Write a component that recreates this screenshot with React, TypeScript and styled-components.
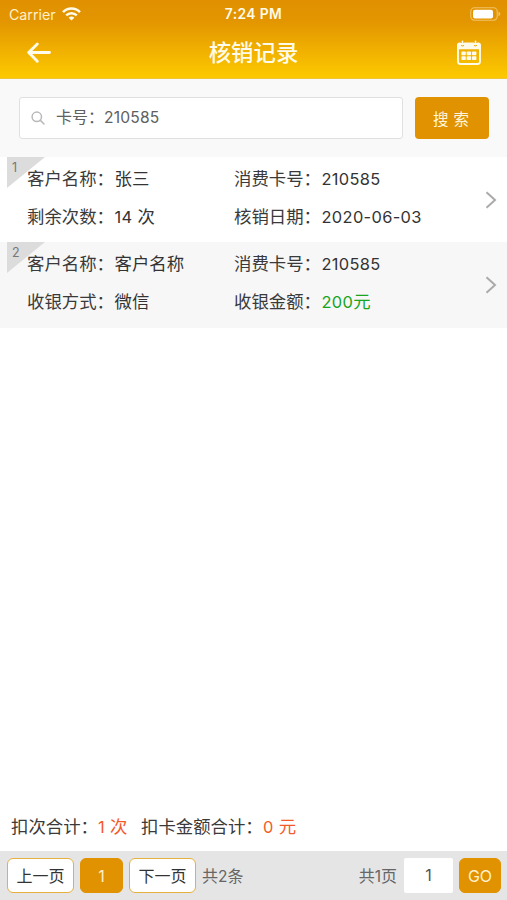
import React from "react";
import styled, { createGlobalStyle } from "styled-components";

const Global = createGlobalStyle`
  * { box-sizing: border-box; }
  body { margin: 0; background: #fff; }
  button, input { font: inherit; margin: 0; }
`;

const Screen = styled.div`
  width: 100%;
  height: 900px;
  display: flex;
  flex-direction: column;
  background: #fff;
  color: #3a3a3a;
  font-family: Inter, "Noto Sans CJK SC", sans-serif;
  font-size: 17.4px;
  overflow: hidden;
`;

const Header = styled.header`
  height: 79px;
  flex: none;
  background: linear-gradient(#e09000 0, #e39600 22px, #fcc800 76px, #fcc800 100%);
  color: #fffbea;
  border-bottom: 1px solid #eec338;
`;

const StatusBar = styled.div`
  height: 27px;
  padding: 0 6px 0 9px;
  display: grid;
  grid-template-columns: 1fr auto 1fr;
  align-items: center;
  line-height: 27px;
`;

const Carrier = styled.div`
  display: flex;
  align-items: center;
  gap: 6px;
  font-size: 14.2px;
  color: #fff0c9;
`;

const Clock = styled.div`
  margin-right: 3px;
  font-weight: 600;
  font-size: 13.8px;
  letter-spacing: 0.4px;
  line-height: 28px;
`;

const Battery = styled.svg`
  justify-self: end;
  margin-top: -1px;
`;

const NavBar = styled.div`
  height: 51px;
  padding: 0 25px 0 25px;
  display: grid;
  grid-template-columns: 28px 1fr 26px;
  align-items: center;
`;

const Title = styled.h1`
  margin: 0 2px 0 0;
  text-align: center;
  font-size: 22.4px;
  line-height: 50px;
  font-weight: 500;
`;

const IconButton = styled.button`
  border: 0;
  padding: 0;
  background: none;
  display: flex;
  color: inherit;
`;

const SearchBar = styled.div`
  height: 78px;
  flex: none;
  padding: 18px 18px 18px 19px;
  display: flex;
  gap: 12px;
  background: #f9f9f9;
`;

const SearchBox = styled.label`
  flex: 1;
  height: 42px;
  padding: 0 11px;
  display: flex;
  align-items: center;
  gap: 11px;
  background: #fff;
  border: 1.5px solid #e0e0e0;
  border-radius: 3px;
  color: #606060;
  font-size: 16px;
  line-height: 24px;
`;

const SearchText = styled.span`
  margin-top: -2px;
`;

const SearchButton = styled.button`
  width: 74px;
  height: 42px;
  border: 0;
  padding: 0 2px 1px 0;
  border-radius: 4px;
  background: #e09200;
  color: #fff6dc;
  font-size: 15.5px;
  word-spacing: 0.5px;
`;

const Record = styled.article<{ $shaded?: boolean }>`
  height: ${(p) => (p.$shaded ? 86 : 85)}px;
  flex: none;
  padding: 3px 10px 0 7px;
  position: relative;
  display: grid;
  grid-template-columns: 20px 207px 1fr 12px;
  background: ${(p) => (p.$shaded ? "#f7f7f7" : "#fff")};
`;

const Corner = styled.span`
  position: absolute;
  left: 7px;
  top: 0;
  width: 38px;
  height: 31px;
  padding-left: 5px;
  background: #dcdcdc;
  clip-path: polygon(0 0, 100% 0, 0 100%);
  color: #777;
  font-size: 12.5px;
  line-height: 21px;
`;

const Column = styled.div`
  display: flex;
  flex-direction: column;
`;

const Field = styled.div`
  height: 38px;
  display: flex;
  align-items: center;
  line-height: 26px;
  white-space: nowrap;
`;

const Label = styled.span`
  width: 87.5px;
`;

const Value = styled.span<{ $green?: boolean }>`
  color: ${(p) => (p.$green ? "#18a51b" : "#333")};
`;

const Num = styled.span<{ $size?: number; $spacing?: number }>`
  font-size: ${(p) => p.$size ?? 16.4}px;
  letter-spacing: ${(p) => p.$spacing ?? 0.35}px;
`;

const Chevron = styled.svg`
  align-self: center;
  margin-top: -3px;
`;

const Spacer = styled.div`
  flex: 1;
`;

const Totals = styled.div`
  height: 50px;
  flex: none;
  padding: 0 11px 1px;
  display: flex;
  align-items: center;
  white-space: nowrap;
`;

const TotalLabel = styled.span<{ $width: number }>`
  width: ${(p) => p.$width}px;
`;

const TotalValue = styled.span<{ $width?: number }>`
  width: ${(p) => (p.$width ? `${p.$width}px` : "auto")};
  color: #f35a2a;
`;

const Pager = styled.footer`
  height: 49px;
  flex: none;
  padding: 7px 6px 7px 7px;
  display: flex;
  align-items: center;
  background: #e5e5e5;
  color: #666;
  font-size: 16px;
  white-space: nowrap;
`;

const PageCount = styled.span`
  margin-top: -2px;
`;

const PageButton = styled.button<{ $width: number; $filled?: boolean }>`
  width: ${(p) => p.$width}px;
  height: 35px;
  padding: 0;
  margin-right: 6px;
  border: 1.5px solid ${(p) => (p.$filled ? "#e09200" : "#e6b03f")};
  border-radius: 6px;
  background: ${(p) => (p.$filled ? "#e09200" : "#fff")};
  color: ${(p) => (p.$filled ? "#fff0c9" : "#333")};
  line-height: 30px;
  &:last-child { margin-right: 0; }
`;

const PageInput = styled.input`
  width: 49px;
  height: 35px;
  margin: 0 6px 0 7px;
  padding: 0 0 1px;
  border: 0;
  border-radius: 2px;
  background: #fff;
  color: #555;
  text-align: center;
`;

function Mixed({ text, size, spacing }: { text: string; size?: number; spacing?: number }) {
  return (
    <>
      {text.split(/([\d-]+ ?)/).filter(Boolean).map((part, i) =>
        /\d/.test(part) ? <Num key={i} $size={size} $spacing={spacing}>{part}</Num> : part
      )}
    </>
  );
}

type Item = { label: string; value: string; green?: boolean };

const records: Item[][][] = [
  [
    [{ label: "客户名称：", value: "张三" }, { label: "剩余次数：", value: "14 次" }],
    [{ label: "消费卡号：", value: "210585" }, { label: "核销日期：", value: "2020-06-03" }],
  ],
  [
    [{ label: "客户名称：", value: "客户名称" }, { label: "收银方式：", value: "微信" }],
    [{ label: "消费卡号：", value: "210585" }, { label: "收银金额：", value: "200元", green: true }],
  ],
];

export default function App() {
  return (
    <Screen>
      <Global />
      <Header>
        <StatusBar>
          <Carrier>
            Carrier
            <svg width="19" height="14" viewBox="0 0 19 14" fill="none" stroke="#fffbea" strokeWidth="2.5">
              <path d="M1 5.1C5.8.3 13.2.3 18 5.1" />
              <path d="M4.2 8.3C7.2 5.4 11.8 5.4 14.8 8.3" />
              <path d="M6.6 10.7C8.3 9.2 10.7 9.2 12.4 10.7L9.5 13.6Z" fill="#fffbea" stroke="none" />
            </svg>
          </Carrier>
          <Clock>7:24 PM</Clock>
          <Battery width="31" height="14" viewBox="0 0 31 14">
            <rect x=".8" y=".8" width="26.4" height="12.4" rx="3.6" fill="none" stroke="#f0c468" strokeWidth="1.1" />
            <rect x="3" y="2.8" width="20" height="8.6" rx="2" fill="#fff" />
            <path d="M28.5 4.8C30.8 5.4 30.8 8.6 28.5 9.2Z" fill="#f0c468" />
          </Battery>
        </StatusBar>
        <NavBar>
          <IconButton aria-label="返回">
            <svg width="28" height="24" viewBox="0 0 28 24" fill="none" stroke="currentColor" strokeWidth="2.9" strokeLinecap="round" strokeLinejoin="round">
              <path d="M24.5 11.5H3.7M12.3 3L3.7 11.5L12.3 20.3" />
            </svg>
          </IconButton>
          <Title>核销记录</Title>
          <IconButton aria-label="日历">
            <svg width="26" height="26" viewBox="0 0 26 26">
              <rect x="2" y="4" width="22" height="20" rx="2.5" fill="none" stroke="currentColor" strokeWidth="1.9" />
              <path d="M1.1 9.2V5Q1.1 2.4 3.7 2.4H4.8V4.8Q4.8 6.6 6.5 6.6T8.2 4.8V2.4H17.8V4.8Q17.8 6.6 19.5 6.6T21.2 4.8V2.4H22.3Q24.9 2.4 24.9 5V9.2Z" fill="currentColor" />
              <path d="M6.5 1.2V4.8M19.5 1.2V4.8" stroke="currentColor" strokeWidth="1.6" strokeLinecap="round" />
              <g fill="currentColor">
                {[11.6, 16.2].map((y) => [5.4, 10.7, 16].map((x) => (
                  <rect key={`${x}-${y}`} x={x} y={y} width="4.4" height="3.7" rx=".7" />
                )))}
              </g>
            </svg>
          </IconButton>
        </NavBar>
      </Header>

      <SearchBar>
        <SearchBox>
          <svg width="14" height="14" viewBox="0 0 14 14" fill="none" stroke="#b9b9b9" strokeWidth="1.5" strokeLinecap="round">
            <circle cx="5.8" cy="5.8" r="4.7" />
            <path d="M9.4 9.4L13 13" />
          </svg>
          <SearchText><Mixed text="卡号：210585" size={15.6} spacing={0.2} /></SearchText>
        </SearchBox>
        <SearchButton>搜 索</SearchButton>
      </SearchBar>

      {records.map((columns, i) => (
        <Record key={i} $shaded={i === 1}>
          <Corner>{i + 1}</Corner>
          <span />
          {columns.map((fields, c) => (
            <Column key={c}>
              {fields.map((f) => (
                <Field key={f.label}>
                  <Label>{f.label}</Label>
                  <Value $green={f.green}><Mixed text={f.value} /></Value>
                </Field>
              ))}
            </Column>
          ))}
          <Chevron width="12" height="18" viewBox="0 0 12 18" fill="none" stroke="#aaa" strokeWidth="2">
            <path d="M1.5 1.2L10 9L1.5 16.8" />
          </Chevron>
        </Record>
      ))}

      <Spacer />

      <Totals>
        <TotalLabel $width={87}>扣次合计：</TotalLabel>
        <TotalValue $width={43}><Mixed text="1 次" /></TotalValue>
        <TotalLabel $width={122}>扣卡金额合计：</TotalLabel>
        <TotalValue><Mixed text="0 元" /></TotalValue>
      </Totals>

      <Pager>
        <PageButton $width={67}>上一页</PageButton>
        <PageButton $width={43} $filled>1</PageButton>
        <PageButton $width={67}>下一页</PageButton>
        <PageCount><Mixed text="共2条" size={15.5} spacing={0} /></PageCount>
        <Spacer />
        <PageCount><Mixed text="共1页" size={15.5} spacing={0} /></PageCount>
        <PageInput defaultValue="1" aria-label="页码" />
        <PageButton $width={42} $filled>GO</PageButton>
      </Pager>
    </Screen>
  );
}
